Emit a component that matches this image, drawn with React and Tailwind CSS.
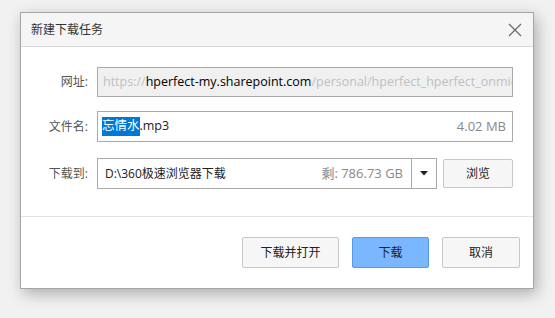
import React from "react";

const FONT = { fontFamily: '"Open Sans", "Noto Sans CJK SC", sans-serif' };

export default function App() {
  return (
    <div className="w-[555px] h-[318px] bg-[#f1f1f1] pt-[12px] pl-[20px] text-[12px] text-[#333]" style={FONT}>
      <div className="w-[514px] h-[277px] bg-white border border-[#a5a5a5] shadow-[3px_5px_14px_rgba(0,0,0,0.28)] flex flex-col">
        {/* Header */}
        <div className="h-[34px] shrink-0 bg-[#f5f5f5] border-b border-[#d8d8d8] flex items-center justify-between pl-[10px] pr-[11px]">
          <span className="text-[12px] text-[#333]">新建下载任务</span>
          <svg width="14" height="14" viewBox="0 0 14 14" className="text-[#666]">
            <path d="M1 1 L13 13 M13 1 L1 13" stroke="currentColor" strokeWidth="1.2" fill="none" />
          </svg>
        </div>

        {/* Body */}
        <div className="flex-1 pl-[22px] pr-[20px] pt-[20px]">
          <div className="flex items-center">
            <label className="w-[46px] text-right pr-[1px] text-[#555] shrink-0">网址:</label>
            <div className="ml-[8px] flex-1 h-[30px] bg-[#f0f0f0] border border-[#aaa] flex items-center pl-[5px] overflow-hidden whitespace-nowrap text-[12.5px]">
              <span className="text-[#c0c0c0]">https://</span>
              <span className="text-black">hperfect-my.sharepoint.com</span>
              <span className="text-[#c0c0c0]">/personal/hperfect_hperfect_onmic</span>
            </div>
          </div>

          <div className="flex items-center mt-[14px]">
            <label className="w-[46px] text-right pr-[1px] text-[#555] shrink-0">文件名:</label>
            <div className="ml-[8px] flex-1 h-[31px] bg-white border border-[#aaa] flex items-center pl-[4px] pr-[6px] text-[12.5px]">
              <span className="bg-[#0078d7] text-white">忘情水</span>
              <span className="text-[#222]">.mp3</span>
              <span className="ml-auto text-[#888] text-[13px]">4.02 MB</span>
            </div>
          </div>

          <div className="flex items-center mt-[16px]">
            <label className="w-[46px] text-right pr-[1px] text-[#555] shrink-0">下载到:</label>
            <div className="ml-[8px] w-[340px] h-[31px] bg-white border border-[#aaa] flex items-center">
              <span className="pl-[7px] text-[#222]">D:\360极速浏览器下载</span>
              <span className="ml-auto pr-[8px] text-[#888] text-[13px]">剩: 786.73 GB</span>
              <div className="w-[25px] h-full border-l border-[#aaa] flex items-center justify-center">
                <svg width="8" height="5" viewBox="0 0 8 5">
                  <path d="M0 0 H8 L4 4.5 Z" fill="#222" />
                </svg>
              </div>
            </div>
            <button className="ml-[6px] w-[70px] h-[29px] bg-[#f6f6f6] border border-[#c8c8c8] rounded-[2px] text-[#222]">浏览</button>
          </div>
        </div>

        {/* Footer */}
        <div className="h-[72px] shrink-0 border-t border-[#e3e3e3] flex items-start justify-end gap-[13px] pt-[20px] pr-[13px]">
          <button className="w-[97px] h-[31px] bg-[#f6f6f6] border border-[#c8c8c8] rounded-[2px] text-[#222]">下载并打开</button>
          <button className="w-[77px] h-[31px] bg-[#7ab7ff] border border-[#5599e8] rounded-[2px] text-[#222]">下载</button>
          <button className="w-[78px] h-[31px] bg-[#f6f6f6] border border-[#c8c8c8] rounded-[2px] text-[#222]">取消</button>
        </div>
      </div>
    </div>
  );
}
